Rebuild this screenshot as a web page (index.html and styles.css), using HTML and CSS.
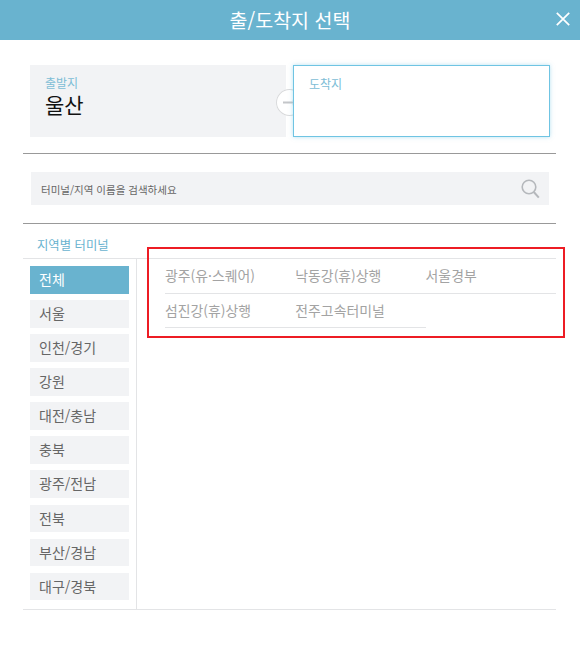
FILE: index.html
```html
<!DOCTYPE html>
<html lang="ko">
<head>
<meta charset="utf-8">
<title>출/도착지 선택</title>
<link rel="stylesheet" href="styles.css">
</head>
<body>
<div class="modal">
  <header class="head">
    <h1 class="title">출/도착지 선택</h1>
    <button class="close" aria-label="닫기">
      <svg viewBox="0 0 14 14" width="14" height="14"><path d="M.8.8l12.4 12.4M13.2.8L.8 13.2" fill="none" stroke="#fff" stroke-width="1.7"/></svg>
    </button>
  </header>
  <section class="route">
    <div class="place from">
      <span class="place-label">출발지</span>
      <strong class="place-name">울산</strong>
    </div>
    <div class="place to">
      <span class="place-label">도착지</span>
    </div>
    <span class="swap">
      <svg viewBox="0 0 27 27" width="27" height="27"><path d="M7 13.5h14M17 10.5l4 3-4 3" fill="none" stroke="#c4c6c9" stroke-width="2"/></svg>
    </span>
  </section>
  <section class="search-wrap">
    <div class="search">
      <span class="search-text">터미널/지역 이름을 검색하세요</span>
      <svg class="search-icon" viewBox="0 0 19 20" width="19" height="20"><circle cx="8" cy="8" r="6.8" fill="none" stroke="#b5b8bc" stroke-width="1.6"/><path d="M12.8 13l5 5.6" fill="none" stroke="#b5b8bc" stroke-width="2"/></svg>
    </div>
  </section>
  <section class="terminals">
    <h2 class="section-title">지역별 터미널</h2>
    <div class="panes">
      <ul class="regions">
        <li class="region active">전체</li>
        <li class="region">서울</li>
        <li class="region">인천/경기</li>
        <li class="region">강원</li>
        <li class="region">대전/충남</li>
        <li class="region">충북</li>
        <li class="region">광주/전남</li>
        <li class="region">전북</li>
        <li class="region">부산/경남</li>
        <li class="region">대구/경북</li>
      </ul>
      <ul class="stops">
        <li class="stop">광주(유·스퀘어)</li>
        <li class="stop">낙동강(휴)상행</li>
        <li class="stop">서울경부</li>
        <li class="stop">섬진강(휴)상행</li>
        <li class="stop">전주고속터미널</li>
      </ul>
    </div>
    <div class="highlight"></div>
  </section>
</div>
</body>
</html>
```
FILE: styles.css
```css
* { box-sizing: border-box; }
html, body { margin: 0; padding: 0; background: #fff; }
body { font-family: "Noto Sans CJK KR", "Liberation Sans", sans-serif; color: #555; }
ul { list-style: none; margin: 0; padding: 0; }
.modal { width: 580px; height: 659px; overflow: hidden; }

.head { height: 40px; background: #69b3cf; display: flex; align-items: center; justify-content: center; position: relative; }
.title { margin: 0; font-size: 19.5px; font-weight: 400; color: #fff; line-height: 40px; }
.close { position: absolute; right: 10px; top: 12px; width: 14px; height: 14px; padding: 0; border: 0; background: none; line-height: 0; }

.route { position: relative; display: flex; gap: 7px; margin: 25px 30px 16px; height: 72px; }
.place { height: 72px; padding: 10px 15px; display: flex; flex-direction: column; }
.from { width: 256px; background: #f2f3f5; }
.to { width: 257px; background: #fff; border: 1px solid #6fc4e3; box-shadow: 0 0 4px rgba(111,196,227,.5); position: relative; z-index: 2; }
.place-label { font-size: 12px; line-height: 16px; color: #7dbdd6; }
.place-name { font-size: 21px; font-weight: 400; line-height: 26px; color: #111; }
.swap { position: absolute; left: 246px; top: 24px; width: 27px; height: 27px; border-radius: 50%; background: #fff; box-shadow: inset 0 0 0 1px #d9dadc; line-height: 0; z-index: 1; }

.search-wrap { margin: 0 24px 0 23px; padding: 18px 7px 18px 8px; border-top: 1px solid #999; border-bottom: 1px solid #999; height: 71px; }
.search { height: 33px; background: #f2f3f5; display: flex; align-items: center; justify-content: space-between; padding: 0 9px 0 10px; }
.search-text { font-size: 10.5px; line-height: 16px; padding-top: 2px; color: #666; }
.search-icon { flex: none; }

.terminals { position: relative; margin: 0 24px 0 23px; }
.section-title { margin: 0; height: 34px; padding: 13px 0 0 14px; font-size: 12.35px; line-height: 16px; font-weight: 400; color: #69b3cf; }
.panes { display: flex; height: 352px; border-top: 1px solid #e3e4e6; border-bottom: 1px solid #e3e4e6; }
.regions { width: 114px; padding: 7px 7px 0; border-right: 1px solid #e3e4e6; flex: none; display: flex; flex-direction: column; gap: 6.4px; }
.region { height: 27.7px; background: #f2f3f5; padding-left: 9px; font-size: 14px; line-height: 26px; color: #666; }
.active { background: #69b3cf; color: #fff; }
.stops { flex: 1; padding-left: 28px; display: grid; grid-template-columns: repeat(3, 130.3px); grid-auto-rows: 34.5px; align-content: start; }
.stop { border-bottom: 1px solid #e3e4e6; font-size: 13.9px; line-height: 32px; color: #a3a3a3; }
.highlight { position: absolute; left: 124px; top: 23px; width: 418px; height: 91px; border: 2px solid #ed1c24; }
```
